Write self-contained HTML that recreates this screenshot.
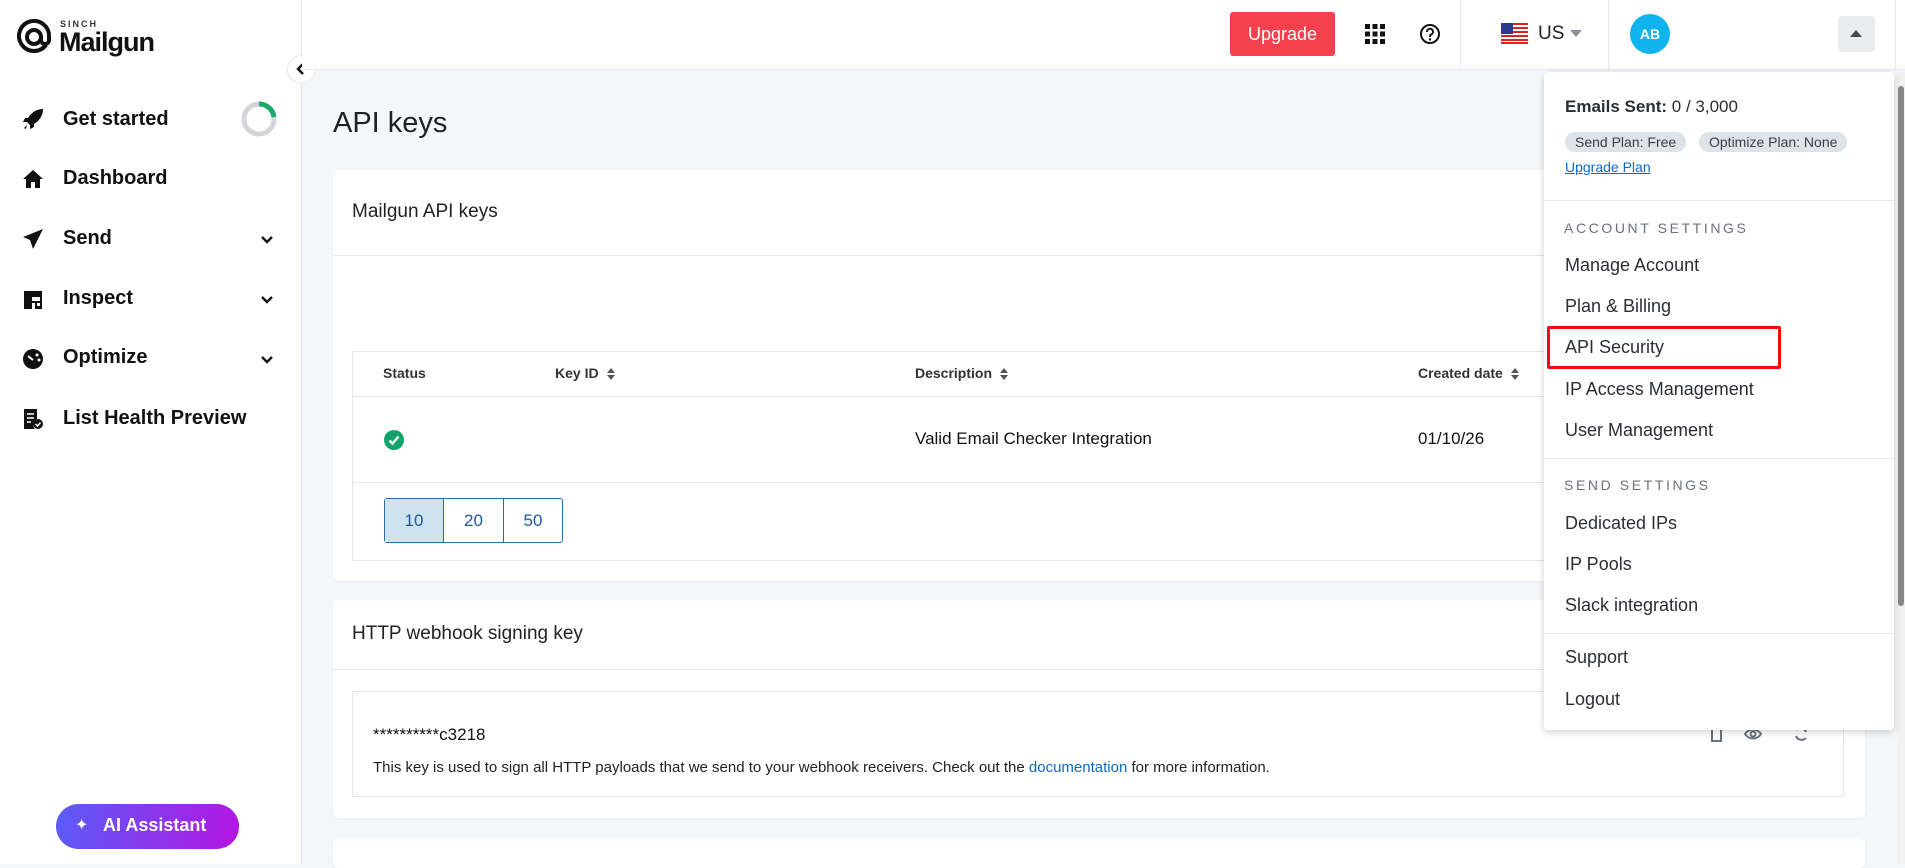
<!DOCTYPE html>
<html><head><meta charset="utf-8"><style>
*{box-sizing:border-box;margin:0;padding:0}
body{width:1905px;height:864px;overflow:hidden;background:#f4f7fa;font-family:"Liberation Sans",sans-serif;color:#1a1d21;position:relative}
.a{position:absolute}
.side{left:0;top:0;width:302px;height:864px;background:#fff;border-right:1px solid #e3e7ec}
.top{left:302px;top:0;width:1603px;height:70px;background:#fff;border-bottom:1px solid #e3e7ec}
.nav{left:63px;font-size:20px;font-weight:bold;color:#111}
.ico{left:22px;width:22px;height:22px}
.chev{left:259px;width:16px;height:16px}
.card{background:#fff;border-radius:6px;box-shadow:0 1px 2px rgba(0,0,0,.06)}
.th{font-size:14px;font-weight:bold;color:#333}
.srt{display:inline-block;vertical-align:middle;margin-left:8px}
.dd{font-size:18px;color:#2b2f33;left:1565px}
.sec{font-size:14px;letter-spacing:2.6px;color:#6b7178;left:1564px}
.sep{left:1544px;width:350px;height:1px;background:#e3e7ec}
</style></head><body>
<div class="a side"></div>
<svg class="a" style="left:16px;top:19px" width="36" height="36" viewBox="0 0 36 36"><path d="M30 26 A15 15 0 1 1 33 18 V21 a4 4 0 0 1 -8 0 V18" fill="none" stroke="#111" stroke-width="4"/><circle cx="18" cy="18" r="7" fill="none" stroke="#111" stroke-width="4"/></svg>
<div class="a" style="left:60px;top:19px;font-size:9px;font-weight:bold;letter-spacing:2px;color:#333">SINCH</div>
<div class="a" style="left:59px;top:27px;font-size:27px;font-weight:bold;color:#111;letter-spacing:-1px">Mailgun</div>
<div class="a" style="left:287px;top:55px;width:29px;height:29px;border-radius:50%;background:#fff;border:1px solid #e3e7ec"></div>
<svg class="a" style="left:295px;top:63px" width="12" height="12" viewBox="0 0 12 12"><path d="M8 1 L3 6 L8 11" fill="none" stroke="#111" stroke-width="2.4"/></svg>
<svg class="a ico" style="top:108px" viewBox="0 0 22 22"><path d="M21 1 C14 1 9 5 6 10 L3 10 L1 14 L5 14 L8 17 L8 21 L12 19 L12 16 C17 13 21 8 21 1Z M2 20 L5 17 L4 21Z" fill="#111"/></svg>
<div class="a nav" style="top:108px">Get started</div>
<svg class="a" style="left:241px;top:101px" width="36" height="36" viewBox="0 0 36 36"><circle cx="18" cy="18" r="15" fill="none" stroke="#d3d5d8" stroke-width="5"/><path d="M18 3 A15 15 0 0 1 33 16" fill="none" stroke="#1aa86b" stroke-width="5"/></svg>
<svg class="a ico" style="top:168px" viewBox="0 0 22 22"><path d="M11 2 L21 11 L18 11 L18 20 L13 20 L13 14 L9 14 L9 20 L4 20 L4 11 L1 11Z" fill="#111"/></svg>
<div class="a nav" style="top:167px">Dashboard</div>
<svg class="a ico" style="top:228px" viewBox="0 0 22 22"><path d="M21 1 L1 9 L8 12 L11 21 Z" fill="#111"/></svg>
<div class="a nav" style="top:227px">Send</div>
<svg class="a ico" style="top:289px" viewBox="0 0 22 22"><path d="M2 2h18v18H2z M10 8h8v4h-8z M10 14h3v6h-3z M15 14h3v3h-3z" fill="#111" fill-rule="evenodd"/></svg>
<div class="a nav" style="top:287px">Inspect</div>
<svg class="a ico" style="top:348px" viewBox="0 0 22 22"><circle cx="11" cy="11" r="10" fill="#111"/><path d="M6 8 L11 12" stroke="#fff" stroke-width="2"/><circle cx="15" cy="7" r="1.5" fill="#fff"/><circle cx="17" cy="12" r="1.5" fill="#fff"/></svg>
<div class="a nav" style="top:346px">Optimize</div>
<svg class="a ico" style="top:408px" viewBox="0 0 22 22"><path d="M2 1h13v10a6 6 0 0 0 -2 10H2z" fill="#111"/><path d="M5 6h7M5 10h7M5 14h4" stroke="#fff" stroke-width="1.6"/><circle cx="16" cy="16" r="5" fill="#111"/><path d="M13.5 16 l2 2 l3-3.5" stroke="#fff" stroke-width="1.5" fill="none"/></svg>
<div class="a nav" style="top:407px">List Health Preview</div>
<svg class="a chev" style="top:232px" viewBox="0 0 16 16"><path d="M3 5 L8 10 L13 5" fill="none" stroke="#111" stroke-width="2.4"/></svg>
<svg class="a chev" style="top:292px" viewBox="0 0 16 16"><path d="M3 5 L8 10 L13 5" fill="none" stroke="#111" stroke-width="2.4"/></svg>
<svg class="a chev" style="top:352px" viewBox="0 0 16 16"><path d="M3 5 L8 10 L13 5" fill="none" stroke="#111" stroke-width="2.4"/></svg>
<div class="a" style="left:56px;top:804px;width:183px;height:45px;border-radius:23px;background:linear-gradient(100deg,#5a5cf8,#b515e2)"></div>
<div class="a" style="left:75px;top:815px;color:#fff;font-size:16px">✦</div>
<div class="a" style="left:103px;top:815px;color:#fff;font-size:18px;font-weight:bold">AI Assistant</div>
<div class="a top"></div>
<div class="a" style="left:1230px;top:12px;width:105px;height:44px;background:#f5414d;border-radius:3px;color:#fff;font-size:18px;text-align:center;line-height:44px">Upgrade</div>
<svg class="a" style="left:1365px;top:24px" width="20" height="20" viewBox="0 0 20 20" fill="#111"><rect x="0" y="0" width="5" height="5"/><rect x="7.5" y="0" width="5" height="5"/><rect x="15" y="0" width="5" height="5"/><rect x="0" y="7.5" width="5" height="5"/><rect x="7.5" y="7.5" width="5" height="5"/><rect x="15" y="7.5" width="5" height="5"/><rect x="0" y="15" width="5" height="5"/><rect x="7.5" y="15" width="5" height="5"/><rect x="15" y="15" width="5" height="5"/></svg>
<svg class="a" style="left:1419px;top:23px" width="22" height="22" viewBox="0 0 22 22"><circle cx="11" cy="11" r="9" fill="none" stroke="#111" stroke-width="2"/><path d="M8 9 a3 3 0 1 1 4 2.6 c-1 .5-1 1-1 2.4" fill="none" stroke="#111" stroke-width="2"/><circle cx="11" cy="16.5" r="1.2" fill="#111"/></svg>
<div class="a" style="left:1460px;top:0;width:1px;height:69px;background:#e3e7ec"></div>
<svg class="a" style="left:1501px;top:23px" width="27" height="21" viewBox="0 0 27 21"><rect width="27" height="21" fill="#fff"/><g fill="#d22"><rect y="0" width="27" height="2"/><rect y="4" width="27" height="2"/><rect y="8" width="27" height="2"/><rect y="12" width="27" height="2"/><rect y="16" width="27" height="2"/><rect y="19" width="27" height="2"/></g><rect width="12" height="11" fill="#2b3a8c"/></svg>
<div class="a" style="left:1538px;top:23px;font-size:19px;color:#222">US</div>
<svg class="a" style="left:1570px;top:30px" width="12" height="8"><path d="M0 0 L12 0 L6 7Z" fill="#8a9096"/></svg>
<div class="a" style="left:1608px;top:0;width:1px;height:69px;background:#e3e7ec"></div>
<div class="a" style="left:1630px;top:14px;width:40px;height:40px;border-radius:50%;background:#0fb4ef;color:#fff;font-size:14px;font-weight:bold;text-align:center;line-height:40px">AB</div>
<div class="a" style="left:1838px;top:16px;width:37px;height:36px;background:#e9ebed;border-radius:4px"></div>
<svg class="a" style="left:1850px;top:30px" width="12" height="8"><path d="M0 7 L12 7 L6 0Z" fill="#444b52"/></svg>
<div class="a" style="left:1895px;top:0;width:1px;height:69px;background:#e3e7ec"></div>
<div class="a" style="left:1897px;top:72px;width:8px;height:792px;background:#f1f1f1"></div>
<div class="a" style="left:1898px;top:86px;width:6px;height:520px;background:#888;border-radius:3px"></div>
<div class="a" style="left:333px;top:107px;font-size:29px;color:#222">API keys</div>
<div class="a card" style="left:333px;top:170px;width:1532px;height:411px"></div>
<div class="a" style="left:352px;top:201px;font-size:19px;font-weight:500;color:#222">Mailgun API keys</div>
<div class="a" style="left:333px;top:255px;width:1532px;height:1px;background:#e3e7ec"></div>
<div class="a" style="left:352px;top:351px;width:1492px;height:210px;border:1px solid #e3e7ec"></div>
<div class="a" style="left:352px;top:396px;width:1492px;height:1px;background:#e3e7ec"></div>
<div class="a" style="left:352px;top:482px;width:1492px;height:1px;background:#e3e7ec"></div>
<div class="a th" style="left:383px;top:365px">Status</div>
<div class="a th" style="left:555px;top:365px">Key ID<svg class="srt" width="8" height="12"><path d="M0 5 L4 0 L8 5Z M0 7 L4 12 L8 7Z" fill="#555"/></svg></div>
<div class="a th" style="left:915px;top:365px">Description<svg class="srt" width="8" height="12"><path d="M0 5 L4 0 L8 5Z M0 7 L4 12 L8 7Z" fill="#555"/></svg></div>
<div class="a th" style="left:1418px;top:365px">Created date<svg class="srt" width="8" height="12"><path d="M0 5 L4 0 L8 5Z M0 7 L4 12 L8 7Z" fill="#555"/></svg></div>
<svg class="a" style="left:384px;top:430px" width="20" height="20" viewBox="0 0 20 20"><circle cx="10" cy="10" r="10" fill="#10a36a"/><path d="M5.5 10.5 L8.5 13.5 L14.5 6.5" fill="none" stroke="#fff" stroke-width="2.4"/></svg>
<div class="a" style="left:915px;top:429px;font-size:17px;color:#111">Valid Email Checker Integration</div>
<div class="a" style="left:1418px;top:429px;font-size:17px;color:#111">01/10/26</div>
<div class="a" style="left:384px;top:498px;width:179px;height:45px;border:1px solid #2b6bab;border-radius:3px;display:flex;font-size:17px;color:#1e5a96">
<div style="width:59px;background:#cde3ee;border-right:1px solid #2b6bab;text-align:center;line-height:43px">10</div>
<div style="width:60px;border-right:1px solid #2b6bab;text-align:center;line-height:43px">20</div>
<div style="width:58px;text-align:center;line-height:43px">50</div></div>
<div class="a card" style="left:333px;top:600px;width:1532px;height:218px"></div>
<div class="a" style="left:352px;top:623px;font-size:19px;font-weight:500;color:#222">HTTP webhook signing key</div>
<div class="a" style="left:333px;top:669px;width:1532px;height:1px;background:#e3e7ec"></div>
<div class="a" style="left:352px;top:691px;width:1492px;height:106px;border:1px solid #e3e7ec"></div>
<div class="a" style="left:373px;top:725px;font-size:17px;color:#111">**********c3218</div>
<div class="a" style="left:373px;top:759px;font-size:15px;color:#222">This key is used to sign all HTTP payloads that we send to your webhook receivers. Check out the <span style="color:#0b6bc4">documentation</span> for more information.</div>
<svg class="a" style="left:1708px;top:724px;" width="110" height="20" viewBox="0 0 110 20" fill="none" stroke="#6b7178" stroke-width="2"><rect x="4" y="4" width="9" height="13"/><path d="M37 10 c4-6 12-6 16 0 c-4 6-12 6-16 0z"/><circle cx="45" cy="10" r="2.5"/><path d="M88 6 a6 6 0 0 1 10 2 M98 14 a6 6 0 0 1 -10 -2"/></svg>
<div class="a card" style="left:333px;top:838px;width:1532px;height:30px"></div>
<div class="a" style="left:1544px;top:72px;width:350px;height:658px;background:#fff;border-radius:4px;box-shadow:0 2px 8px rgba(0,0,0,.18)"></div>
<div class="a" style="left:1565px;top:97px;font-size:17px;color:#2b2f33"><b>Emails Sent:</b> 0 / 3,000</div>
<div class="a" style="left:1565px;top:132px;height:20px;padding:0 10px;border-radius:10px;background:#dde3e8;font-size:14px;line-height:20px;color:#3a4047">Send Plan: Free</div>
<div class="a" style="left:1699px;top:132px;height:20px;padding:0 10px;border-radius:10px;background:#dde3e8;font-size:14px;line-height:20px;color:#3a4047">Optimize Plan: None</div>
<div class="a" style="left:1565px;top:159px;font-size:14px;color:#0b6bc4;text-decoration:underline">Upgrade Plan</div>
<div class="a sep" style="top:200px"></div>
<div class="a sec" style="top:220px">ACCOUNT SETTINGS</div>
<div class="a dd" style="top:255px">Manage Account</div>
<div class="a dd" style="top:296px">Plan &amp; Billing</div>
<div class="a" style="left:1547px;top:326px;width:234px;height:43px;border:3px solid #f20c0c;border-radius:2px"></div>
<div class="a dd" style="top:337px">API Security</div>
<div class="a dd" style="top:379px">IP Access Management</div>
<div class="a dd" style="top:420px">User Management</div>
<div class="a sep" style="top:458px"></div>
<div class="a sec" style="top:477px">SEND SETTINGS</div>
<div class="a dd" style="top:513px">Dedicated IPs</div>
<div class="a dd" style="top:554px">IP Pools</div>
<div class="a dd" style="top:595px">Slack integration</div>
<div class="a sep" style="top:633px"></div>
<div class="a dd" style="top:647px">Support</div>
<div class="a dd" style="top:689px">Logout</div>
</body></html>
